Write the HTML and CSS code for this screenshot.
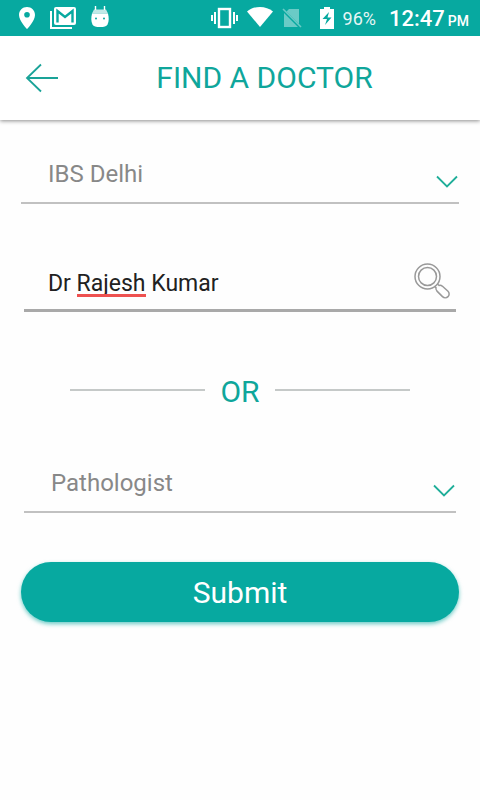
FILE: index.html
```html
<!DOCTYPE html>
<html lang="en">
<head>
<meta charset="utf-8">
<meta name="viewport" content="width=device-width, initial-scale=1">
<title>Find a Doctor</title>
<link rel="stylesheet" href="styles.css">
</head>
<body>
<div class="status">
  <div class="status-group notifications">
    <svg width="16" height="22" viewBox="0 0 16 22" fill="currentColor"><path fill-rule="evenodd" d="M8 0C3.500 0 0 3.500 0 8c0 6 8 14 8 14s8-8 8-14c0-4.500-3.500-8-8-8zm0 5a2.800 2.800 0 1 1 0 5.600A2.800 2.800 0 0 1 8 5z"/></svg>
    <svg width="26" height="22" viewBox="0 0 26 22"><path d="M1 4v17h21" fill="none" stroke="currentColor" stroke-width="2"/><rect x="4" width="22" height="18" rx="2" fill="currentColor"/><path d="M7.500 15.500V4l7.500 6 7.500-6v11.500" class="cut" stroke-width="2.400"/></svg>
    <svg width="18" height="24" viewBox="0 0 18 24"><path d="M4.500 0v4M13.500 0v4" stroke="currentColor" stroke-width="1.400"/><path d="M3 3.500h12l2 4H1z" fill="currentColor" opacity=".75"/><path d="M1 7.500h16c1 4 1 8-.5 11-1 2-3.500 2.500-7.500 2.500S2.500 20.500 1.500 18.500C0 15.500 0 11.500 1 7.500z" fill="currentColor"/><circle cx="5" cy="12.500" r="1" class="dot"/><circle cx="13" cy="12.500" r="1" class="dot"/></svg>
  </div>
  <div class="status-group system">
    <svg width="27" height="22" viewBox="0 0 27 22" fill="none" stroke="currentColor" stroke-width="2"><rect x="8" y="2" width="11" height="18" stroke-width="2.400"/><path d="M4 5v12M1 8v6M23 5v12M26 8v6"/></svg>
    <svg width="26" height="22" viewBox="0 0 26 22" fill="currentColor"><path d="M0 4.500C7-1.500 19-1.500 26 4.500L13 20z"/></svg>
    <svg width="20" height="22" viewBox="0 0 20 22" class="faded"><path d="M7 2h10v15L4.500 4.500zM2 6v14h14z" fill="currentColor"/><path d="M1 2l18 18" stroke="currentColor" stroke-width="1.600"/></svg>
    <svg width="14" height="22" viewBox="0 0 14 22" fill="currentColor"><path d="M4 0h6v2h4v20H0V2h4z"/><path d="M9 5l-6.500 7H7l-2 6 6.500-7.500H7.500z" class="dot"/></svg>
    <span class="battery">96%</span>
    <span class="clock">12:47<small>PM</small></span>
  </div>
</div>
<header class="bar">
  <button class="back" type="button" aria-label="Back"><svg width="34" height="30" viewBox="0 0 34 30" fill="none" stroke="currentColor" stroke-width="1.800"><path d="M16 1.500L2 15l14 13.500M2 15h31"/></svg></button>
  <h1>FIND A DOCTOR</h1>
</header>
<form class="form">
  <div class="field wide">
    <select aria-label="Centre"><option>IBS Delhi</option></select>
    <svg class="chevron" width="22" height="13" viewBox="0 0 22 13"><path d="M1 1.500l10 10 10-10"/></svg>
  </div>
  <div class="field search">
    <input type="text" value="Dr Rajesh Kumar" aria-label="Doctor name" spellcheck="false">
    <span class="spelling"></span>
    <button class="find" type="button" aria-label="Search"><svg width="36" height="38" viewBox="0 0 36 38" fill="none" stroke="currentColor" stroke-width="1.500"><circle cx="13.500" cy="14.500" r="12.500"/><circle cx="13.500" cy="14.500" r="9"/><path d="M23.500 22l1.500 1.500c1.500-.5 2.500 0 3.500.800l5.500 5c1.500 1.500 1.500 3.800 0 5.300s-4 1.500-5.500 0l-5.500-5.500c-1-1-1.500-2-1-3.500l-1.500-1.500"/></svg></button>
  </div>
  <div class="divider">OR</div>
  <div class="field">
    <select aria-label="Speciality"><option>Pathologist</option></select>
    <svg class="chevron" width="22" height="13" viewBox="0 0 22 13"><path d="M1 1.500l10 10 10-10"/></svg>
  </div>
  <button class="submit" type="submit">Submit</button>
</form>
</body>
</html>
```
FILE: styles.css
```css
* { box-sizing: border-box; }
body {
  margin: 0;
  min-height: 100vh;
  background: #fefefe;
  color: #212121;
  font-family: Roboto, "Liberation Sans", sans-serif;
}
svg { display: block; flex: none; }
button { padding: 0; border: 0; background: none; font: inherit; cursor: pointer; }

.status {
  position: relative;
  display: flex;
  justify-content: space-between;
  height: 36px;
  padding: 0 11px 0 19px;
  background: #07a9a0;
  color: #fff;
}
.status-group { display: flex; align-items: center; }
.notifications { gap: 15px; }
.system { gap: 9px; }
.cut { fill: none; stroke: #07a9a0; }
.dot { fill: #07a9a0; }
.faded { opacity: .4; margin-right: 9px; }
.battery { font-size: 18px; opacity: .9; }
.clock {
  display: flex;
  align-items: baseline;
  gap: 3px;
  margin-left: 4px;
  font-size: 22px;
  font-weight: 500;
  white-space: nowrap;
}
.clock small { font-size: 14px; }

.bar {
  display: grid;
  grid-template-columns: 48px 1fr;
  align-items: center;
  height: 84px;
  padding: 0 24px 0 25px;
  background: #fff;
  box-shadow: 0 1px 4px rgba(0, 0, 0, .45);
  color: #0fa69b;
}
.back { color: #1aa398; }
.bar h1 { margin: 0; font-size: 30px; font-weight: 400; line-height: 36px; text-align: center; }

.form { display: flex; flex-direction: column; padding: 24px 21px; }
.field {
  position: relative;
  display: flex;
  align-items: center;
  height: 60px;
  margin: 0 3px;
  border-bottom: 2px solid #c1c1c1;
}
.field.wide { margin: 0; }
.field select, .field input {
  flex: 1;
  min-width: 0;
  height: 58px;
  padding: 2px 60px 0 27px;
  border: 0;
  outline: 0;
  background: none;
  color: #888;
  font: inherit;
  font-size: 24px;
  appearance: none;
}
.field.search { margin-top: 48px; border-bottom: 3px solid #a9a9a9; }
.field.search input { padding: 6px 0 0 24px; color: #212121; font-size: 23px; }
.chevron {
  position: absolute;
  right: 1px;
  bottom: 14px;
  fill: none;
  stroke: #1fae99;
  stroke-width: 1.8;
  pointer-events: none;
}
.spelling {
  position: absolute;
  left: 53px;
  bottom: 12px;
  width: 69px;
  height: 3px;
  background: #ee5150;
}
.find { margin-right: 6px; color: #999; }

.divider {
  display: flex;
  align-items: center;
  gap: 15px;
  margin: 60px 49px 0;
  color: #0fa69b;
  font-size: 30px;
  line-height: 40px;
}
.divider::before, .divider::after {
  content: "";
  flex: 1;
  height: 2px;
  margin-bottom: 4px;
  background: #c5c9c8;
}
.divider + .field { margin-top: 41px; }

.submit {
  height: 60px;
  margin-top: 49px;
  border-radius: 30px;
  background: #07a9a0;
  box-shadow: 0 2px 4px rgba(7, 169, 160, .6);
  color: #fff;
  font-size: 30px;
}
```
